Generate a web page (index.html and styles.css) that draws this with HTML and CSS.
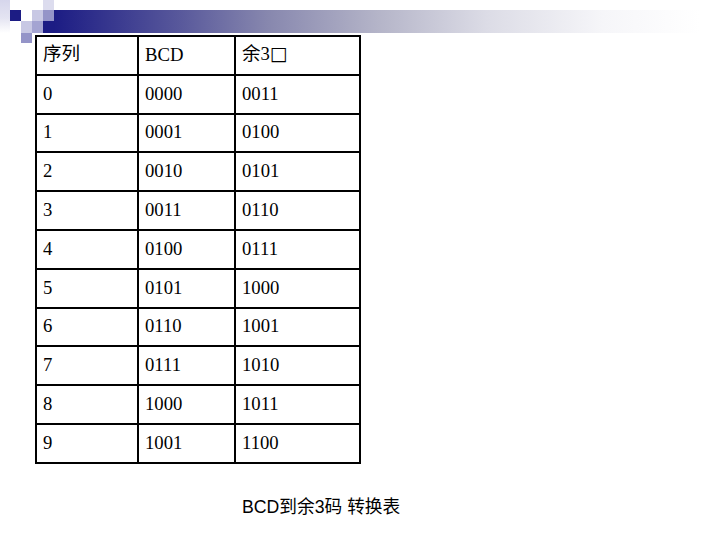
FILE: index.html
```html
<!DOCTYPE html>
<html lang="zh">
<head>
<meta charset="utf-8">
<title>BCD到余3码 转换表</title>
<link rel="stylesheet" href="styles.css">
</head>
<body>
<div class="deco" aria-hidden="true">
  <div class="sq strip"></div>
  <div class="sq navy c1r1"></div>
  <div class="sq pale c4r0"></div>
  <div class="sq light c3r1"></div>
  <div class="sq mid c4r1"></div>
  <div class="sq light c2r2"></div>
  <div class="sq mid2 c3r2"></div>
  <div class="sq navy c4r2"></div>
  <div class="sq mid c2r3"></div>
  <div class="bar"></div>
</div>
<main class="page">
  <table class="conv">
    <colgroup>
      <col class="w1"><col class="w2"><col class="w3">
    </colgroup>
    <tr><td><span class="lift cjk">序列</span></td><td>BCD</td><td><span class="lift"><span class="cjk">余</span>3<span class="tofu">□</span></span></td></tr>
    <tr><td>0</td><td>0000</td><td>0011</td></tr>
    <tr><td>1</td><td>0001</td><td>0100</td></tr>
    <tr><td>2</td><td>0010</td><td>0101</td></tr>
    <tr><td>3</td><td>0011</td><td>0110</td></tr>
    <tr><td>4</td><td>0100</td><td>0111</td></tr>
    <tr><td>5</td><td>0101</td><td>1000</td></tr>
    <tr><td>6</td><td>0110</td><td>1001</td></tr>
    <tr><td>7</td><td>0111</td><td>1010</td></tr>
    <tr><td>8</td><td>1000</td><td>1011</td></tr>
    <tr><td>9</td><td>1001</td><td>1100</td></tr>
  </table>
  <p class="caption">BCD到余3码 转换表</p>
</main>
</body>
</html>
```

FILE: styles.css
```css
html, body {
  margin: 0;
  padding: 0;
  background: #ffffff;
}
body {
  width: 720px;
  height: 540px;
  overflow: hidden;
  position: relative;
}
.deco {
  position: absolute;
  left: 0;
  top: 0;
  width: 720px;
  height: 43px;
  display: grid;
  grid-template-columns: 10px 11px 11px 11px 11px 646px;
  grid-template-rows: 10px 11px 12px 10px;
  z-index: 0;
}
.strip {
  grid-column: 1;
  grid-row: 1 / 4;
  background: linear-gradient(to bottom, #d6d6ec 0%, #e4e4f2 55%, #ffffff 100%);
}
.navy { background: #1c1c84; }
.pale { background: #dcdcee; }
.light { background: #c8c8e4; }
.mid { background: #9494c8; }
.mid2 { background: #a4a4d2; }
.c1r1 { grid-column: 2; grid-row: 2; }
.c4r0 { grid-column: 5; grid-row: 1; }
.c3r1 { grid-column: 4; grid-row: 2; }
.c4r1 { grid-column: 5; grid-row: 2; }
.c2r2 { grid-column: 3; grid-row: 3; }
.c3r2 { grid-column: 4; grid-row: 3; }
.c4r2 { grid-column: 5; grid-row: 3; }
.c2r3 { grid-column: 3; grid-row: 4; }
.bar {
  grid-column: 6;
  grid-row: 2 / 4;
  background: linear-gradient(to right, #1c1c84 0%, #5a5a9c 20%, #8787ae 33%, #b4b4c8 50%, #dcdce6 67%, #f6f6f9 85%, #ffffff 100%);
}
.page {
  position: relative;
  z-index: 1;
  padding: 35px 0 0 35px;
}
.conv {
  border-collapse: collapse;
  width: 324px;
  table-layout: fixed;
  font-family: "Liberation Serif", "Times New Roman", serif;
  font-size: 18.7px;
  color: #000;
}
.w1 { width: 102px; }
.w2 { width: 97px; }
.w3 { width: 125px; }
.conv tr { height: 38.8px; }
.conv td {
  border: 2px solid #000;
  padding: 0 0 1px 6px;
  vertical-align: middle;
  line-height: 20px;
}
.cjk {
  font-family: "Noto Sans CJK SC", sans-serif;
  font-size: 18.5px;
}
.lift {
  position: relative;
  top: -2px;
}
.tofu {
  font-family: "DejaVu Sans", sans-serif;
  font-size: 19px;
}
.caption {
  margin: 33px 0 0 207px;
  font-family: "Liberation Sans", Arial, "Noto Sans CJK SC", sans-serif;
  font-size: 17.7px;
  line-height: 20px;
  color: #000;
}
```
